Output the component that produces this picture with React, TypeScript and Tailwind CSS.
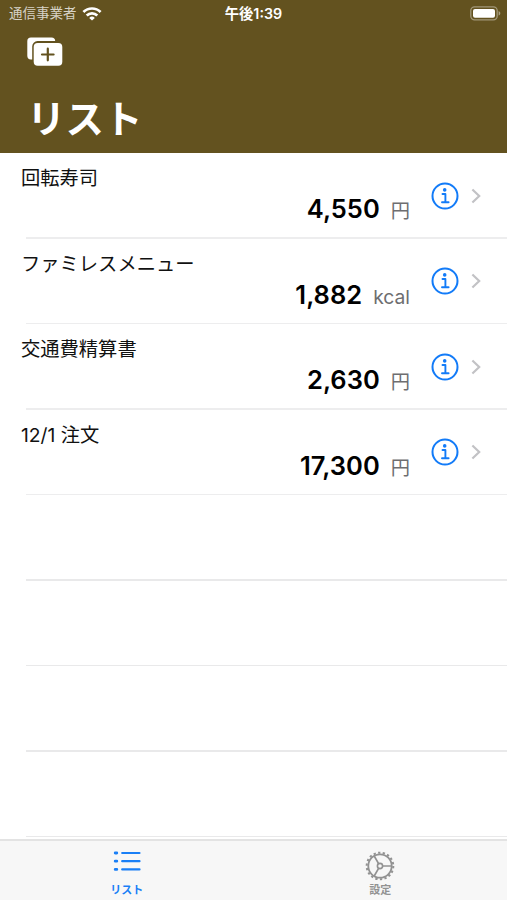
import React from 'react';

interface ListItem {
  id: number;
  name: string;
  amount: string;
  unit: string;
}

const items: ListItem[] = [
  { id: 1, name: '回転寿司', amount: '4,550', unit: '円' },
  { id: 2, name: 'ファミレスメニュー', amount: '1,882', unit: 'kcal' },
  { id: 3, name: '交通費精算書', amount: '2,630', unit: '円' },
  { id: 4, name: '12/1 注文', amount: '17,300', unit: '円' },
];

const emptyRows = [5, 6, 7, 8];

const WifiIcon = () => (
  <svg width="20" height="14" viewBox="0 0 20 14" fill="none" stroke="white" strokeWidth="2.7">
    <path d="M1.4 5a12.3 12.3 0 0 1 17.2 0" />
    <path d="M4.7 8.5a7.6 7.6 0 0 1 10.6 0" />
    <path d="M10 13.6 7.2 10.9a4 4 0 0 1 5.6 0Z" fill="white" stroke="none" />
  </svg>
);

const BatteryIcon = () => (
  <svg width="31" height="15" viewBox="0 0 31 15">
    <rect x="0.8" y="0.8" width="26.4" height="13" rx="3.8" fill="none" stroke="white" strokeOpacity="0.4" strokeWidth="1.3" />
    <rect x="3" y="2.9" width="22" height="8.8" rx="2" fill="white" />
    <path d="M28.6 5v4.6c1-.4 1.7-1.3 1.7-2.3s-.7-1.9-1.7-2.3Z" fill="white" fillOpacity="0.45" />
  </svg>
);

const AddIcon = () => (
  <svg width="36" height="30" viewBox="0 0 36 30">
    <path
      d="M4 .5h20.5a3.7 3.7 0 0 1 3.7 3.6H10.5a5.3 5.3 0 0 0-5.300 5.300v13.100H4a3.700 3.700 0 0 1-3.700-3.700V4.200A3.700 3.700 0 0 1 4 .5Z"
      fill="white"
    />
    <rect x="6.7" y="6" width="28.6" height="22.8" rx="4" fill="white" />
    <path d="M20.8 11.7v11.6M15 17.5h11.6" stroke="#63521f" strokeWidth="2.2" strokeLinecap="round" />
  </svg>
);

const InfoIcon = () => (
  <svg width="28" height="28" viewBox="0 0 28 28" fill="none" stroke="#127bf8">
    <circle cx="14" cy="14" r="12.5" strokeWidth="2" />
    <circle cx="13.7" cy="7.9" r="1.8" fill="#127bf8" stroke="none" />
    <path d="M11.5 12h2.9v7.900M11 20.200h6.600" strokeWidth="1.9" strokeLinecap="round" strokeLinejoin="round" />
  </svg>
);

const ChevronIcon = () => (
  <svg width="10" height="16" viewBox="0 0 10 16" fill="none" stroke="#c2c2c5" strokeWidth="2.2">
    <path d="m1.4 1.5 6.8 6.5-6.8 6.5" />
  </svg>
);

const ListIcon = () => (
  <svg width="28" height="21" viewBox="0 0 28 21" fill="none" stroke="#1a7ff6" strokeWidth="2.2" strokeLinecap="round">
    <path d="M9.2 2h17.3M9.2 10.2h17.3M9.2 18.4h17.3" />
    <path d="M2.2 2h1.6M2.2 10.2h1.6M2.2 18.4h1.6" strokeWidth="2.8" />
  </svg>
);

const GearIcon = () => (
  <svg width="30" height="30" viewBox="0 0 30 30" fill="none" stroke="#929292">
    <circle cx="15" cy="15" r="13.3" strokeWidth="2" strokeDasharray="2.3 2.343" />
    <circle cx="15" cy="15" r="11.7" strokeWidth="1.8" />
    <circle cx="15" cy="15" r="2.6" strokeWidth="1.6" />
    <path d="M17.8 15h8.7M13.6 12.6 9.2 5M13.6 17.4 9.2 25" strokeWidth="1.7" />
  </svg>
);

const ListRow: React.FC<{ item: ListItem }> = ({ item }) => (
  <li className="h-[85.5px] flex flex-col">
    <div className="flex-1 flex items-center pl-[21px] pr-[26px]">
      <div className="flex-1 h-full flex flex-col pt-[11px]">
        <div className="h-7 text-[19.3px] leading-7 text-[#111]">{item.name}</div>
        <div className="flex justify-end items-baseline gap-[11px] h-[34px] leading-[34px]">
          <span className="text-[25.5px] font-semibold text-black">{item.amount}</span>
          <span className="text-[19.3px] text-[#6e6e70]">{item.unit}</span>
        </div>
      </div>
      <div className="flex items-center gap-[12px] ml-[21px] pt-px">
        <InfoIcon />
        <ChevronIcon />
      </div>
    </div>
    <div className="ml-[26px] h-[1.5px] bg-[#ededee]" />
  </li>
);

const App: React.FC = () => {
  return (
    <div className="w-[507px] h-[900px] flex flex-col overflow-hidden bg-white font-['Inter','Noto_Sans_CJK_JP',sans-serif]">
      <header className="h-[153px] shrink-0 bg-[#63521f] text-white">
        <div className="h-[27px] grid grid-cols-3 items-center pl-[9px] pr-[6px]">
          <div className="flex items-center gap-[5px] text-[13.5px] text-white/75">
            <span>通信事業者</span>
            <WifiIcon />
          </div>
          <div className="text-center text-[14.3px] leading-5 font-semibold -ml-[3px]">午後1:39</div>
          <div className="flex justify-end">
            <BatteryIcon />
          </div>
        </div>
        <div className="pl-[27px] pt-[10px]">
          <AddIcon />
        </div>
        <h1 className="pl-[27px] mt-[26.5px] text-[38.5px] leading-[50px] font-bold">リスト</h1>
      </header>

      <main className="flex-1 min-h-0 overflow-hidden">
        <ul>
          {items.map((item) => (
            <ListRow key={item.id} item={item} />
          ))}
          {emptyRows.map((row) => (
            <li key={row} className="h-[85.5px] flex flex-col justify-end">
              <div className="ml-[26px] h-[1.5px] bg-[#e9e9ea]" />
            </li>
          ))}
        </ul>
      </main>

      <nav className="h-[61px] shrink-0 grid grid-cols-2 bg-[#f7f7f7] border-t-2 border-[#e3e3e3] text-[11px] leading-4 font-bold">
        <button className="flex flex-col items-center text-[#1a7ff6] pt-[10px]">
          <ListIcon />
          <span className="mt-[10px]">リスト</span>
        </button>
        <button className="flex flex-col items-center text-[#929292] pt-[10px]">
          <GearIcon />
          <span className="mt-px">設定</span>
        </button>
      </nav>
    </div>
  );
};

export default App;
